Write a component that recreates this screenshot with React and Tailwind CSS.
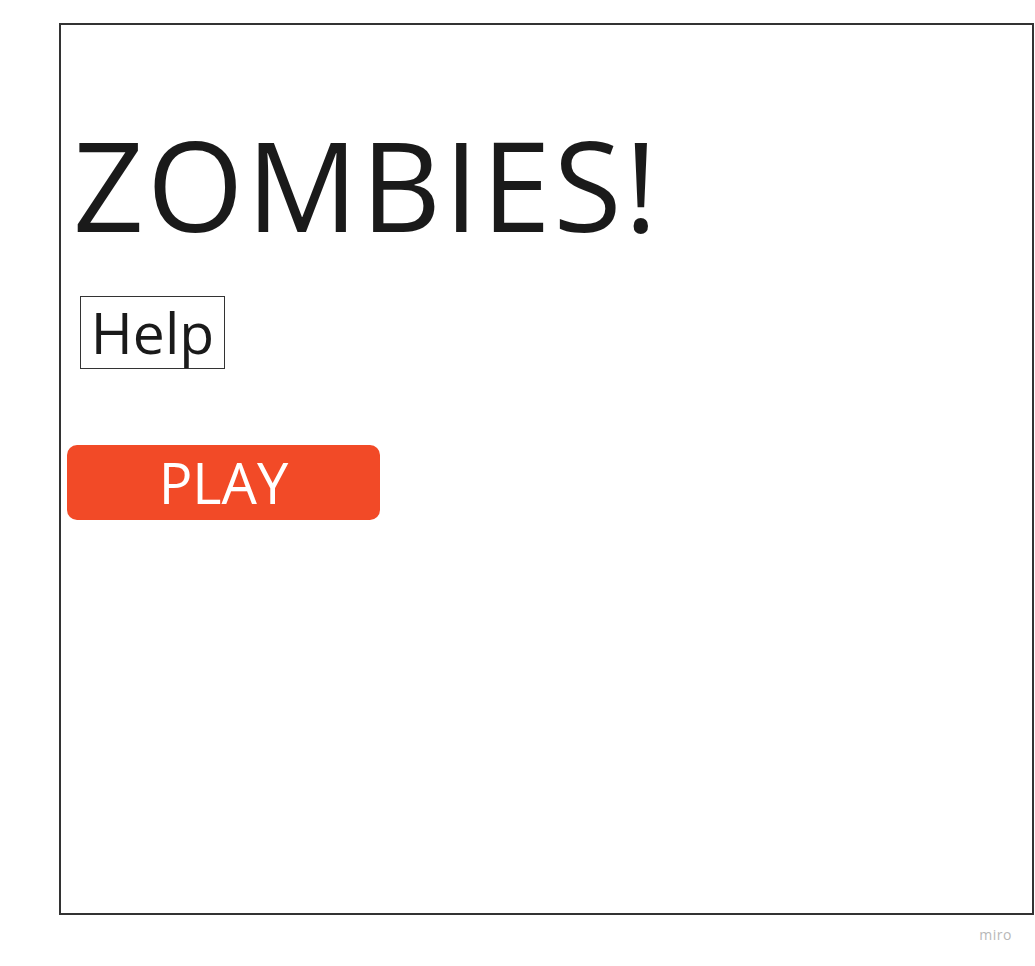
export default function App() {
  return (
    <div className="w-[1035px] h-[966px] bg-white" style={{ fontFamily: '"Open Sans", "Liberation Sans", sans-serif' }}>
      <div className="pt-[23px] pl-[59px]">
        {/* board frame */}
        <div className="w-[975px] h-[892px] border-2 border-[#333333] flex flex-col items-start">
          <h1 className="mt-[97px] ml-[12px] text-[124px] leading-[124px] tracking-[3px] text-[#1a1a1a] font-normal">ZOMBIES!</h1>
          <div className="mt-[50px] ml-[19px] w-[145px] h-[73px] border border-[#333333] text-center text-[57px] leading-[71px] text-[#1a1a1a]">
            Help
          </div>
          <button className="mt-[76px] ml-[6px] w-[313px] h-[75px] rounded-[10px] bg-[#f24a27] text-white text-[56px] leading-[75px] text-center">
            PLAY
          </button>
        </div>
      </div>
      <div className="flex justify-end pr-[23px] pt-[12px]">
        <span className="text-[14px] leading-[16px] tracking-[0.5px] text-[#b8b8b8]">miro</span>
      </div>
    </div>
  );
}
